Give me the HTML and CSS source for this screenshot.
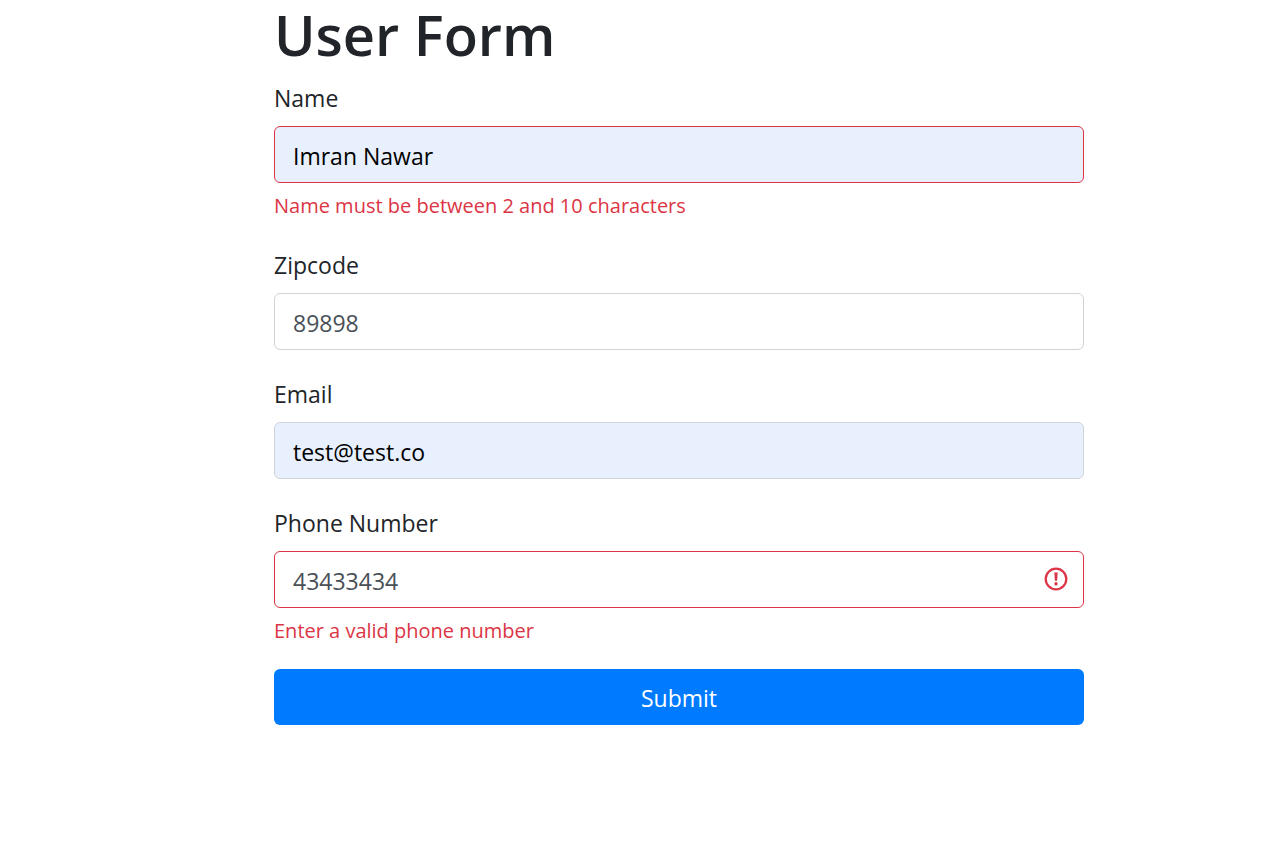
FILE: index.html
```html
<!DOCTYPE html>
<html lang="en">
<head>
<meta charset="utf-8">
<meta name="viewport" content="width=device-width, initial-scale=1">
<title>User Form</title>
<link rel="stylesheet" href="styles.css">
</head>
<body>
<main class="container">
  <h1 class="title">User Form</h1>
  <form class="form" novalidate>
    <div class="group">
      <label class="label" for="name">Name</label>
      <input class="control filled invalid" id="name" type="text" value="Imran Nawar" aria-describedby="name-error">
      <p class="feedback" id="name-error">Name must be between 2 and 10 characters</p>
    </div>
    <div class="group">
      <label class="label" for="zipcode">Zipcode</label>
      <input class="control" id="zipcode" type="text" value="89898">
    </div>
    <div class="group">
      <label class="label" for="email">Email</label>
      <input class="control filled" id="email" type="email" value="test@test.co">
    </div>
    <div class="group">
      <label class="label" for="phone">Phone Number</label>
      <div class="field">
        <input class="control invalid" id="phone" type="text" value="43433434" aria-describedby="phone-error">
        <svg class="icon" viewBox="0 0 24 24" aria-hidden="true">
          <circle cx="12" cy="12" r="10.3" fill="none" stroke="currentColor" stroke-width="2.3"/>
          <path d="M10.3 5.5h3.4l-.6 8.2h-2.2z" fill="currentColor"/>
          <circle cx="12" cy="16.8" r="1.7" fill="currentColor"/>
        </svg>
      </div>
      <p class="feedback" id="phone-error">Enter a valid phone number</p>
    </div>
    <button class="submit" type="submit">Submit</button>
  </form>
</main>
</body>
</html>
```
FILE: styles.css
```css
* {
  box-sizing: border-box;
}

body {
  margin: 0;
  background: #fff;
  color: #212529;
  font: 400 23px/36px "Segoe UI", "Open Sans", sans-serif;
}

.container {
  width: 64%;
  max-width: 810px;
  margin-left: 274px;
}

.title {
  margin: 0 0 12px;
  font-size: 56px;
  font-weight: 600;
  line-height: 68px;
}

.group {
  margin-bottom: 26px;
}

.group:last-of-type {
  margin-bottom: 23px;
}

.label {
  display: block;
  margin-bottom: 10px;
}

.control {
  display: block;
  width: 100%;
  height: 57px;
  padding: 9px 18px 7px;
  border: 1px solid #ced4da;
  border-radius: 6px;
  background: #fff;
  color: #495057;
  font: inherit;
}

.filled {
  background: #e8f0fe;
  color: #000;
}

.invalid {
  border-color: #dc3545;
}

.field {
  position: relative;
}

.icon {
  position: absolute;
  top: 16px;
  right: 16px;
  width: 24px;
  height: 24px;
  color: #dc3545;
}

.feedback {
  margin: 8px 0 0;
  color: #dc3545;
  font-size: 20px;
  line-height: 30px;
}

.submit {
  display: block;
  width: 100%;
  height: 56px;
  padding: 2px 18px 0;
  border: 0;
  border-radius: 6px;
  background: #007bff;
  color: #fff;
  font: inherit;
}
```
